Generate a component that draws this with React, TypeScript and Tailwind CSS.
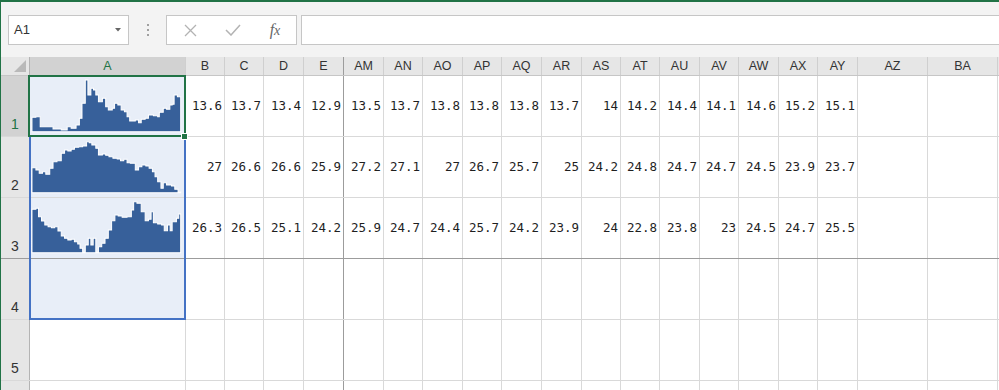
import React from "react";

type Pt = [number, number];

const COLS = [
  { k: "A", w: 156 }, { k: "B", w: 39 }, { k: "C", w: 39 }, { k: "D", w: 40 }, { k: "E", w: 40 },
  { k: "AM", w: 40 }, { k: "AN", w: 39 }, { k: "AO", w: 40 }, { k: "AP", w: 39 }, { k: "AQ", w: 40 },
  { k: "AR", w: 40 }, { k: "AS", w: 39 }, { k: "AT", w: 39 }, { k: "AU", w: 40 }, { k: "AV", w: 39 },
  { k: "AW", w: 40 }, { k: "AX", w: 39 }, { k: "AY", w: 40 }, { k: "AZ", w: 70 }, { k: "BA", w: 70 },
];

const DATA: string[][] = [
  ["13.6", "13.7", "13.4", "12.9", "13.5", "13.7", "13.8", "13.8", "13.8", "13.7", "14", "14.2", "14.4", "14.1", "14.6", "15.2", "15.1"],
  ["27", "26.6", "26.6", "25.9", "27.2", "27.1", "27", "26.7", "25.7", "25", "24.2", "24.8", "24.7", "24.7", "24.5", "23.9", "23.7"],
  ["26.3", "26.5", "25.1", "24.2", "25.9", "24.7", "24.4", "25.7", "24.2", "23.9", "24", "22.8", "23.8", "23", "24.5", "24.7", "25.5"],
];

// sparkline tops, traced in 3x coords of the cell
const SPARKS: { pts: Pt[]; base: number; vy: number }[] = [
  {
    base: 230, vy: 63,
    pts: [[96, 187], [108, 185], [121, 215], [160, 222], [185, 225], [203, 215], [215, 220], [230, 210], [240, 190], [248, 145], [258, 75], [266, 120], [275, 100], [283, 105], [290, 120], [298, 140], [310, 130], [320, 155], [328, 165], [340, 160], [347, 145], [357, 150], [367, 165], [377, 170], [385, 185], [393, 198], [410, 195], [420, 203], [428, 193], [440, 190], [450, 180], [465, 182], [478, 185], [483, 172], [495, 160], [505, 163], [515, 150], [522, 148], [528, 120], [538, 125]],
  },
  {
    base: 188, vy: 21,
    pts: [[96, 113], [108, 120], [118, 130], [128, 125], [138, 133], [150, 115], [160, 95], [172, 92], [185, 70], [195, 60], [205, 63], [215, 58], [225, 52], [238, 50], [250, 48], [262, 35], [270, 38], [278, 45], [290, 55], [298, 75], [310, 72], [320, 76], [330, 80], [342, 85], [355, 87], [365, 92], [375, 88], [385, 98], [395, 100], [410, 120], [420, 110], [430, 105], [442, 108], [452, 115], [462, 125], [470, 140], [478, 155], [488, 175], [495, 158], [505, 165], [520, 168], [530, 178], [540, 185]],
  },
  {
    base: 368, vy: 204,
    pts: [[96, 238], [108, 235], [116, 260], [125, 273], [135, 285], [145, 290], [155, 293], [165, 290], [175, 303], [185, 318], [195, 325], [205, 330], [215, 328], [225, 335], [235, 342], [242, 355], [250, 365], [258, 345], [267, 325], [275, 345], [282, 325], [290, 365], [298, 350], [308, 340], [318, 325], [328, 300], [338, 272], [348, 255], [358, 258], [370, 262], [385, 260], [398, 240], [405, 215], [415, 220], [428, 245], [440, 272], [450, 268], [458, 245], [465, 278], [478, 282], [490, 285], [498, 302], [508, 285], [516, 302], [522, 275], [535, 265], [542, 252]],
  },
];

function stepPath(pts: Pt[], end: number, base: number) {
  let d = `M${pts[0][0]} ${base}`;
  pts.forEach(([x, y], i) => {
    const nx = i + 1 < pts.length ? pts[i + 1][0] : end;
    d += ` L${x} ${y} L${nx} ${y}`;
  });
  return d + ` L${end} ${base} Z`;
}

function Sparkline({ idx }: { idx: number }) {
  const s = SPARKS[idx];
  return (
    <svg width={155} height={60} viewBox={`90 ${s.vy} 465 180`} preserveAspectRatio="none" className="block">
      <path d={stepPath(s.pts, 548, s.base)} fill="#37609a" stroke="#ffffff" strokeWidth={1} vectorEffect="non-scaling-stroke" />
    </svg>
  );
}

const uiFont = { fontFamily: '"Liberation Sans", Arial, sans-serif' };
const monoFont = { fontFamily: '"DejaVu Sans Mono", "Liberation Mono", monospace' };

function Toolbar() {
  return (
    <div className="flex h-[55px] items-start bg-[#f3f3f3] pl-[7px] pt-[13px]">
      <div className="flex h-[30px] w-[121px] items-center justify-between border border-[#c6c6c6] bg-white pl-[5px] pr-[7px] text-[13px] text-[#333]" style={uiFont}>
        <span>A1</span>
        <svg width="6" height="4" viewBox="0 0 6 4"><path d="M0 0 H6 L3 3.5 Z" fill="#666" /></svg>
      </div>
      <div className="flex h-[30px] w-[37px] flex-col items-center justify-center gap-[3px]">
        <span className="h-[2px] w-[2px] bg-[#a0a0a0]" />
        <span className="h-[2px] w-[2px] bg-[#a0a0a0]" />
        <span className="h-[2px] w-[2px] bg-[#a0a0a0]" />
      </div>
      <div className="flex h-[30px] w-[131px] items-center border border-[#c6c6c6] bg-white">
        <div className="flex w-[44px] justify-center pl-[2px]">
          <svg width="13" height="13" viewBox="0 0 13 13"><path d="M1 1 L12 12 M12 1 L1 12" stroke="#b3b3b3" strokeWidth="1.3" /></svg>
        </div>
        <div className="flex w-[44px] justify-center">
          <svg width="16" height="12" viewBox="0 0 16 12"><path d="M1 6 L6 11 L15 1" fill="none" stroke="#b3b3b3" strokeWidth="1.5" /></svg>
        </div>
        <div className="flex w-[40px] justify-center text-[16px] italic text-[#666]" style={{ fontFamily: '"Liberation Serif", "Times New Roman", serif' }}>
          <span>f<span className="text-[14px]">x</span></span>
        </div>
      </div>
      <div className="ml-[4px] h-[30px] flex-1 border border-r-0 border-[#c6c6c6] bg-white" />
    </div>
  );
}

function HeaderRow() {
  return (
    <div className="flex h-[19px] border-b border-[#c6c6c6] bg-[#e6e6e6] text-[12.5px] text-[#333]" style={uiFont}>
      <div className="relative w-[29px] shrink-0 border-r border-[#b4b4b4]">
        <svg width="12" height="12" viewBox="0 0 12 12" className="absolute bottom-[3px] right-[3px]"><path d="M12 0 V12 H0 Z" fill="#b9b9b9" /></svg>
      </div>
      {COLS.map((c) => (
        <div
          key={c.k}
          style={{ width: c.w }}
          className={`flex shrink-0 items-center justify-center border-r ${c.k === "E" ? "border-[#9c9c9c]" : "border-[#cfcfcf]"} ${c.k === "A" ? "bg-[#d2d2d2] text-[#217346]" : ""}`}
        >
          {c.k}
        </div>
      ))}
    </div>
  );
}

function Row({ n }: { n: number }) {
  const vals = DATA[n - 1];
  return (
    <div className={`flex h-[61px] border-b ${n === 3 ? "border-[#9c9c9c]" : "border-[#d9d9d9]"}`}>
      <div
        className={`flex w-[29px] shrink-0 items-end justify-center border-r border-[#b4b4b4] pb-[1px] text-[14px] ${n === 1 ? "bg-[#d2d2d2] text-[#217346]" : "bg-[#e6e6e6] text-[#333]"}`}
        style={uiFont}
      >
        {n <= 5 ? n : null}
      </div>
      {COLS.map((c, i) => (
        <div
          key={c.k}
          style={{ width: c.w, ...monoFont }}
          className={`flex shrink-0 items-center justify-end border-r pr-[2px] text-[12.5px] text-[#1f1f1f] ${c.k === "E" ? "border-[#9c9c9c]" : "border-[#d9d9d9]"} ${i === 0 && n <= 4 ? "bg-[#e8eef8]" : "bg-white"}`}
        >
          {i === 0 && n <= 3 ? <Sparkline idx={n - 1} /> : vals && i > 0 ? vals[i - 1] : null}
        </div>
      ))}
    </div>
  );
}

export default function App() {
  return (
    <div className="relative h-[390px] w-[999px] overflow-hidden border-l border-t-2 border-[#217346] bg-white">
      <Toolbar />
      <HeaderRow />
      {[1, 2, 3, 4, 5, 6].map((n) => (
        <Row key={n} n={n} />
      ))}
      {/* sparkline group outline */}
      <div className="absolute left-[28px] top-[134px] h-[184px] w-[157px] border-2 border-t-0 border-[#4472c4]" />
      {/* active cell */}
      <div className="absolute left-[27px] top-[73px] h-[62px] w-[158px] border-2 border-[#217346]" />
      <div className="absolute left-[180px] top-[131px] h-[7px] w-[7px] border border-white bg-[#217346]" />
    </div>
  );
}
